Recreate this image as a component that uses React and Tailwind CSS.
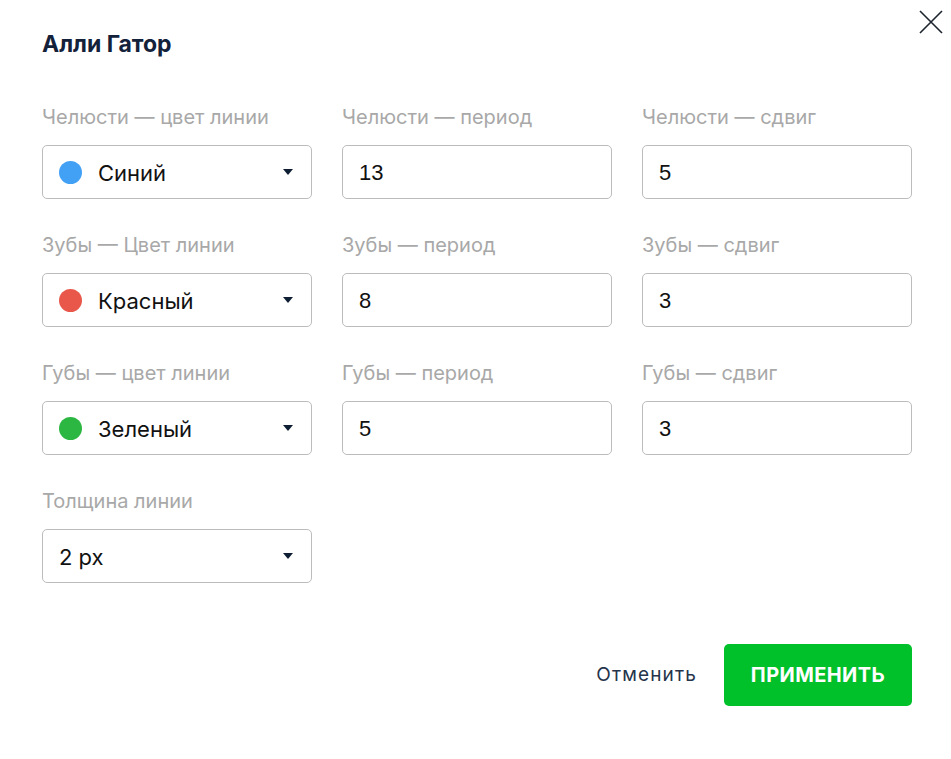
import React from 'react'

const sans = { fontFamily: 'Inter, "Noto Sans", sans-serif' }

const fields = [
  [
    { label: 'Челюсти — цвет линии', type: 'color', value: 'Синий', color: 'bg-[#42a0f5]' },
    { label: 'Челюсти — период', value: '13' },
    { label: 'Челюсти — сдвиг', value: '5' },
  ],
  [
    { label: 'Зубы — Цвет линии', type: 'color', value: 'Красный', color: 'bg-[#e8574a]' },
    { label: 'Зубы — период', value: '8' },
    { label: 'Зубы — сдвиг', value: '3' },
  ],
  [
    { label: 'Губы — цвет линии', type: 'color', value: 'Зеленый', color: 'bg-[#2cb742]' },
    { label: 'Губы — период', value: '5' },
    { label: 'Губы — сдвиг', value: '3' },
  ],
  [{ label: 'Толщина линии', type: 'select', value: '2 px' }],
]

function Caret() {
  return (
    <svg width="10" height="6" viewBox="0 0 10 6" className="shrink-0">
      <path d="M0 0h10L5 6z" fill="#0f1e33" />
    </svg>
  )
}

function Field({ f }) {
  return (
    <div className="flex flex-col">
      <div className="text-[20px] leading-6 text-[#a8a8a8] mb-4 whitespace-nowrap" style={sans}>{f.label}</div>
      {f.type ? (
        <div className="h-[54px] rounded-[5px] border border-[#bcbcbc] flex items-center pl-[16px] pr-[18px]">
          {f.color && <span className={`w-[23px] h-[23px] rounded-full ${f.color} mr-[16px]`} />}
          <span className="flex-1 text-[22px] text-[#111] pt-[2px]" style={sans}>{f.value}</span>
          <Caret />
        </div>
      ) : (
        <div className="h-[54px] rounded-[5px] border border-[#bcbcbc] flex items-center px-4 text-[22px] text-[#111]" style={{ fontFamily: '"Liberation Sans", Arial, sans-serif' }}>
          {f.value}
        </div>
      )}
    </div>
  )
}

export default function App() {
  return (
    <div className="relative w-[951px] h-[759px] bg-white pl-[42px] pr-[39px] pt-[30px]">
      <button className="absolute right-[8px] top-[10px] w-[24px] h-[24px]" aria-label="close">
        <svg width="24" height="24" viewBox="0 0 24 24">
          <path d="M1 1L23 23M23 1L1 23" stroke="#1c2430" strokeWidth="1.6" />
        </svg>
      </button>
      <h2 className="text-[23px] leading-7 font-bold text-[#13213a]" style={sans}>Алли Гатор</h2>
      <div className="mt-[47px] grid grid-cols-3 gap-x-[30px] gap-y-[34px]">
        {fields.map((row, i) =>
          [0, 1, 2].map(j => (row[j] ? <Field key={`${i}-${j}`} f={row[j]} /> : <div key={`${i}-${j}`} />))
        )}
      </div>
      <div className="mt-[61px] flex justify-end items-center">
        <button className="text-[19px] tracking-[0.06em] text-[#25344a] mr-[27px]" style={sans}>Отменить</button>
        <button className="h-[62px] w-[188px] rounded-[5px] bg-[#00c12a] text-white text-[20px] font-bold tracking-[0.02em]" style={sans}>
          ПРИМЕНИТЬ
        </button>
      </div>
    </div>
  )
}
